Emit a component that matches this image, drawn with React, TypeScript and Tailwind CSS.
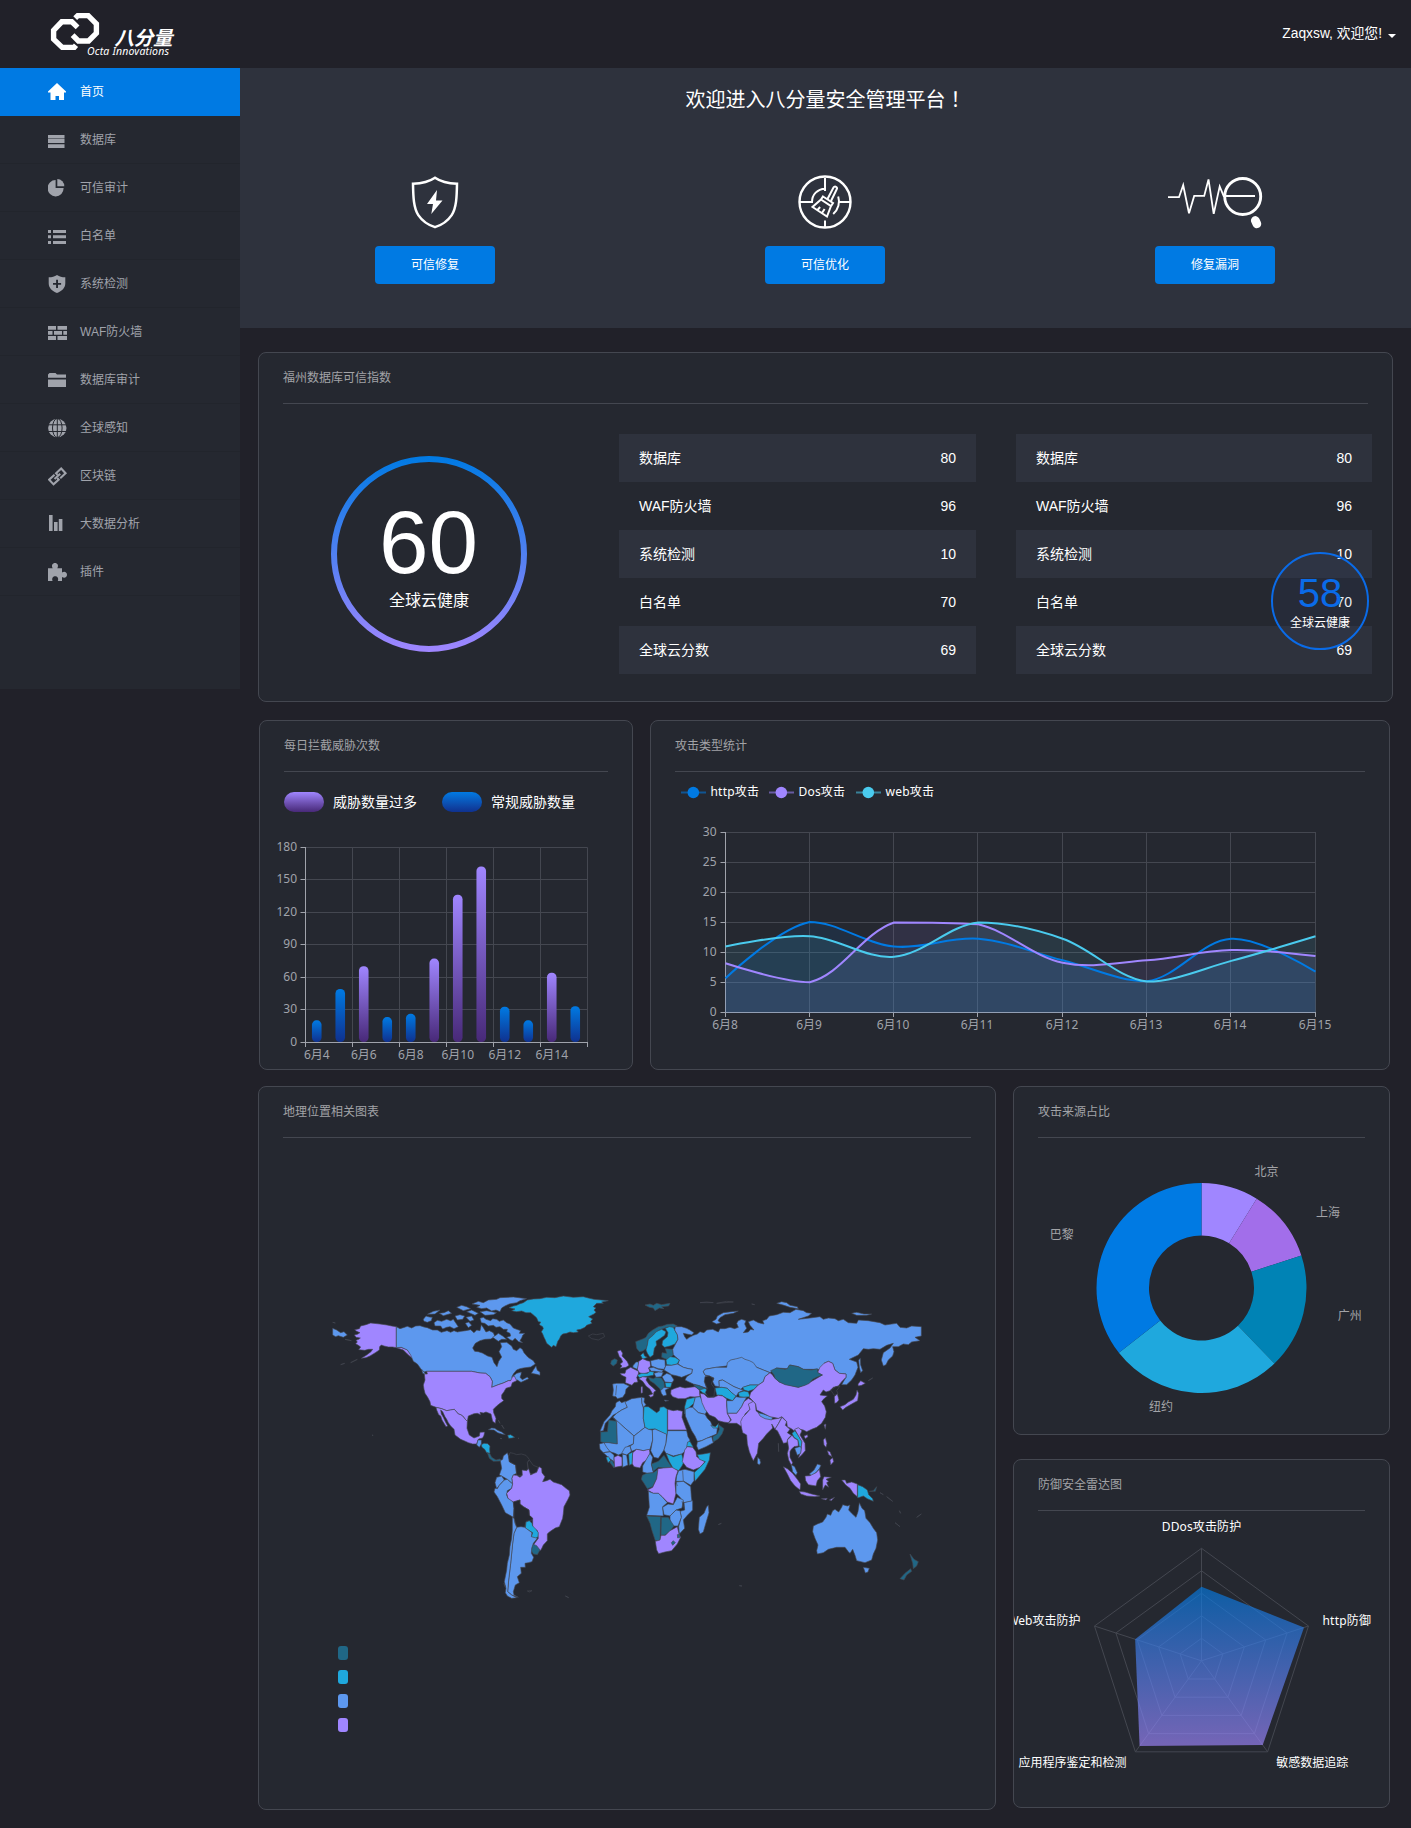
import React from 'react';

const SANS = "font-['Liberation_Sans','Noto_Sans_CJK_SC',sans-serif]";
const CHART = "font-['Noto_Sans','Noto_Sans_CJK_SC',sans-serif]";

/* ---------- Sidebar icons, 20x20 ---------- */
const icons: Record<string, React.ReactNode> = {
  home: <path d="M9 1 18 9.6v.9h-2V18h-5v-4H7.5v4h-5v-7.5H0v-.9Z" />,
  db: <path d="M0 5h16.5v3.6H0ZM0 9.1h16.5v4H0ZM0 14.3h16.5v3.6H0Z" />,
  pie: (
    <>
      <path d="M7.6 2v8h8a8 8.2 0 1 1-8-8Z" />
      <path d="M9.3 1.1a7 7 0 0 1 7 7.2h-7Z" />
    </>
  ),
  list: <path d="M0 4h3v3H0ZM5 4h13v3H5ZM0 9.2h3v3H0ZM5 9.2h13v3H5ZM0 15h3v3H0ZM5 15h13v3H5Z" />,
  shield: (
    <path
      fillRule="evenodd"
      d="M9 1c2.4 1.700 5 2.300 8.300 2.300v6c0 4.500-3.300 8-8.300 9.700C4 17.300.7 13.800.7 9.300v-6C4 3.300 6.600 2.700 9 1ZM8.100 5.800v3.100H5v1.900h3.100v3.100h1.900v-3.100h3.100V8.900H10V5.800Z"
    />
  ),
  wall: (
    <path d="M0 4h8v3.800H0ZM9.500 4H19v3.800H9.500ZM0 9h4.500v3.800H0ZM6 9h8v3.800H6ZM15.300 9H19v3.800h-3.700ZM0 14h8v4H0ZM9.500 14H19v4H9.500Z" />
  ),
  folder: <path d="M0 4.500 1.500 3h6L9 4.500h9v3.300H0ZM0 9.400h18V17H0Z" />,
  globe: (
    <>
      <circle cx="9.300" cy="10" r="9.200" />
      <g fill="none" stroke="#252830" strokeWidth="1">
        <path d="M0 6.800h19M0 13.500h19M9.300 0v20" />
        <ellipse cx="9.300" cy="10" rx="4.800" ry="9.500" />
      </g>
    </>
  ),
  link: (
    <g fill="none" stroke="currentColor" strokeWidth="2.100" transform="rotate(-43 9.300 10.500)">
      <path d="M8.500 7.300H1.200v6.400h7V11.600" />
      <path d="M10.300 13.700h7.300V7.300h-7V9.500" />
      <path d="M5.500 10.500h7.800" />
    </g>
  ),
  bars: <path d="M1 1h3.600v16H1ZM6 8h3.600v9H6ZM10.800 5h3.600v12h-3.600Z" />,
  puzzle: (
    <path d="M0 6.200h4.700C3 3.500 4.600 1 7 1s4 2.500 2.300 5.200H14v4.300c2.700-1.700 5 0 5 2.300s-2.300 4-5 2.300V19h-4.200c1.200-3-.6-4.700-2.600-4.700S3.400 16 4.600 19H0Z" />
  ),
};

const nav: [string, string][] = [
  ['home', '首页'],
  ['db', '数据库'],
  ['pie', '可信审计'],
  ['list', '白名单'],
  ['shield', '系统检测'],
  ['wall', 'WAF防火墙'],
  ['folder', '数据库审计'],
  ['globe', '全球感知'],
  ['link', '区块链'],
  ['bars', '大数据分析'],
  ['puzzle', '插件'],
];

function Logo() {
  return (
    <svg width="130" height="50" viewBox="48 9 130 50" className="ml-12" fill="none">
      <g stroke="#fff" strokeWidth="5.400">
        <path d="M76 45.200 74.200 47.400H62.200L53.600 39.200V30.300L61.800 21.800H71.800L77.600 27.400" />
        <path d="M75.200 18.200 77.800 15.600H88.200L96.400 23.800V33.200L88.600 41H78.400L72.600 35.200" />
      </g>
      <text
        x="0"
        y="0"
        transform="translate(114.500 45.200) skewX(-14)"
        fill="#fff"
        fontSize="19.500"
        fontWeight="700"
        textLength="58"
        className={SANS}
      >
        八分量
      </text>
      <text x="87" y="54.800" fill="#fff" fontSize="10.500" fontStyle="italic" textLength="82" className={CHART}>
        Octa Innovations
      </text>
    </svg>
  );
}

function RepairIcon() {
  return (
    <svg width="50" height="54" viewBox="410 175 50 54" fill="none">
      <path
        d="M435 177.800c-6 4.100-13.500 5.700-22 6 .2 13 .6 24.200 5.300 31.300 4.500 6.600 10 10 16.700 12 6.700-2 12.200-5.400 16.700-12 4.700-7.100 5.100-18.300 5.300-31.300-8.500-.3-16-1.900-22-6Z"
        stroke="#fff"
        strokeWidth="2.500"
      />
      <path d="m437 190-10 14h6l-1.700 10L442.500 200.500h-6.500Z" fill="#fff" />
    </svg>
  );
}

function CleanIcon() {
  return (
    <svg width="56" height="54" viewBox="797 175 56 54" fill="none" stroke="#fff">
      <circle cx="825" cy="202" r="25.500" strokeWidth="2.400" />
      <path d="M825 178v13M800 202h12c0-7.500 5.500-13 13-13.300M838.500 202H850M825 220.500V227" strokeWidth="2" />
      <path d="M838.200 196.500c2 6 .2 13-5 17.500" strokeWidth="2" />
      <path d="m827.500 199 6-11.500a1.800 1.800 0 0 1 3.200 1.800L831 201" strokeWidth="2" />
      <path d="m823 196.500 10 6.500-2 3-10-6.500ZM821 199.500 812.500 207l14.500 9.500 4-10.500M817.500 210l2.600-3M822 213l2.600-4" strokeWidth="2" />
    </svg>
  );
}

function LeakIcon() {
  return (
    <svg width="98" height="54" viewBox="1166 175 98 54" fill="none" stroke="#fff">
      <path d="M1168 197.200h11l4.200-12 5.800 28 5.200-17.300h10l4.300-16.500 5.200 34.500 6-27.500 4 9.600h31.300" strokeWidth="1.800" />
      <circle cx="1242.700" cy="196.500" r="18" strokeWidth="2.900" />
      <rect x="1251.600" y="216" width="8.800" height="12.400" rx="4.400" fill="#fff" stroke="none" transform="rotate(-24 1256 222)" />
    </svg>
  );
}

function Card({ title, className, children }: { title: string; className: string; children: React.ReactNode }) {
  return (
    <section className={`flex shrink-0 flex-col overflow-hidden rounded-lg border border-[#444750] bg-[#252830] ${className}`}>
      <h2 className="mx-6 flex h-[51px] shrink-0 items-center border-b border-[#444750] text-xs text-[#a2a3a7]">{title}</h2>
      {children}
    </section>
  );
}

const scores: [string, number][] = [
  ['数据库', 80],
  ['WAF防火墙', 96],
  ['系统检测', 10],
  ['白名单', 70],
  ['全球云分数', 69],
];

function ScoreList({ className }: { className: string }) {
  return (
    <ul className={`mt-[30px] ${className}`}>
      {scores.map(([name, value], i) => (
        <li key={name} className={`flex h-12 items-center justify-between px-5 text-sm text-white ${i % 2 === 0 ? 'bg-[#2e323d]' : ''}`}>
          <span>{name}</span>
          <span>{value}</span>
        </li>
      ))}
    </ul>
  );
}

/* ---------- Bar chart ---------- */
const bars = [20, 49, 70, 23, 26, 77, 136, 162, 32.500, 20, 64, 33];

function BarChart() {
  const x0 = 305;
  const y0 = 1042;
  return (
    <svg width="372" height="257" viewBox="260 812 372 257" className={`shrink-0 ${CHART}`} fontSize="12">
      <defs>
        <linearGradient id="barHigh" x1="0" y1="0" x2="0" y2="1">
          <stop offset="0" stopColor="#a086ff" />
          <stop offset="1" stopColor="#482978" />
        </linearGradient>
        <linearGradient id="barLow" x1="0" y1="0" x2="0" y2="1">
          <stop offset="0" stopColor="#007ae3" />
          <stop offset="1" stopColor="#0f318f" />
        </linearGradient>
      </defs>
      {[0, 30, 60, 90, 120, 150, 180].map((v) => {
        const y = Math.floor(y0 - (v * 195) / 180) + 0.500;
        return (
          <g key={v}>
            {v > 0 && <path d={`M305.500 ${y}H587.500`} stroke="#444750" />}
            <path d={`M300.500 ${y}h5`} stroke="#a0a3ab" />
            <text x="297" y={y + 3} textAnchor="end" fill="#a0a3ab">
              {v}
            </text>
          </g>
        );
      })}
      {[1, 2, 3, 4, 5, 6].map((i) => (
        <path key={i} d={`M${Math.floor(305 + i * 47) + 0.500} 847.500V1042`} stroke="#444750" />
      ))}
      {bars.map((v, i) => {
        const h = (v * 195) / 180;
        return (
          <rect
            key={i}
            x={x0 + 23.500 * (i + 0.500) - 4.800}
            y={y0 - h}
            width="9.600"
            height={h}
            rx="4.500"
            fill={v > 60 ? 'url(#barHigh)' : 'url(#barLow)'}
          />
        );
      })}
      <path d="M305.500 847V1042.500H588" stroke="#a0a3ab" fill="none" />
      {[0, 1, 2, 3, 4, 5, 6].map((i) => (
        <path key={i} d={`M${305.500 + i * 47} 1042v5`} stroke="#a0a3ab" />
      ))}
      {[4, 6, 8, 10, 12, 14].map((d, i) => (
        <text key={d} x={316.800 + i * 47} y="1058.500" textAnchor="middle" fill="#a0a3ab">{`6月${d}`}</text>
      ))}
    </svg>
  );
}

/* ---------- Smoothed line chart ---------- */
const series = [
  { name: 'http攻击', color: '#007ae3', data: [5.700, 15.100, 11, 12.300, 8.700, 5.200, 12.300, 6.800] },
  { name: 'Dos攻击', color: '#a086ff', data: [8.200, 5.050, 15, 14.700, 8.300, 8.700, 10.400, 9.400] },
  { name: 'web攻击', color: '#4acbee', data: [11, 12.700, 9.300, 15, 12.300, 5.150, 8.600, 12.700] },
];
const legendX = [681, 769, 856];
const SMOOTH = 0.350;

function smoothPath(data: number[]) {
  const pts = data.map((v, i) => [725.500 + i * 84.286, 1012.500 - v * 6]);
  const ys = pts.map((p) => p[1]);
  const lo = Math.min(...ys);
  const hi = Math.max(...ys);
  const clampY = (y: number) => Math.max(lo, Math.min(hi, y));
  let d = `M${pts[0][0]} ${pts[0][1]}`;
  let cp = pts[0];
  for (let i = 1; i < pts.length; i++) {
    const p = pts[i];
    const prev = pts[i - 1];
    const next = pts[i + 1] ?? p;
    const vx = next[0] - prev[0];
    const vy = next[1] - prev[1];
    const a = Math.hypot(p[0] - prev[0], p[1] - prev[1]);
    const b = Math.hypot(next[0] - p[0], next[1] - p[1]);
    const r = b / (a + b);
    const last = i === pts.length - 1;
    const c2 = last ? p : [p[0] - vx * SMOOTH * (1 - r), clampY(p[1] - vy * SMOOTH * (1 - r))];
    d += `C${cp[0]} ${cp[1]} ${c2[0]} ${c2[1]} ${p[0]} ${p[1]}`;
    cp = [p[0] + vx * SMOOTH * r, clampY(p[1] + vy * SMOOTH * r)];
  }
  return d;
}

function LineChart() {
  return (
    <svg width="738" height="297" viewBox="651 772 738 297" className={`shrink-0 ${CHART}`} fontSize="12">
      {series.map((s, i) => (
        <g key={s.name}>
          <path d={`M${legendX[i]} 792.500h25`} stroke={s.color} strokeWidth="2" opacity=".55" />
          <circle cx={legendX[i] + 12.300} cy="792.500" r="5.800" fill={s.color} />
          <text x={legendX[i] + 29.500} y="796" fill="#fff" textLength={[48.500, 46.500, 48.500][i]}>
            {s.name}
          </text>
        </g>
      ))}
      {[0, 5, 10, 15, 20, 25, 30].map((v) => (
        <g key={v}>
          <path d={`M725.500 ${1012.500 - v * 6}H1315.500`} stroke="#444750" />
          <path d={`M720.500 ${1012.500 - v * 6}h5`} stroke="#a0a3ab" />
          <text x="716.500" y={1015.500 - v * 6} textAnchor="end" fill="#a0a3ab">
            {v}
          </text>
        </g>
      ))}
      {[8, 9, 10, 11, 12, 13, 14, 15].map((d, i) => {
        const x = Math.floor(725 + i * 84.290) + 0.500;
        return (
          <g key={d}>
            <path d={`M${x} 832V1012`} stroke="#444750" />
            <path d={`M${x} 1012v5`} stroke="#a0a3ab" />
            <text x={x - 0.500} y="1028.500" textAnchor="middle" fill="#a0a3ab">{`6月${d}`}</text>
          </g>
        );
      })}
      <path d="M725.500 832V1012.500H1315.500" stroke="#a0a3ab" fill="none" />
      {series.map((s) => (
        <path key={s.name} d={`${smoothPath(s.data)}V1012.500H725.500Z`} fill={s.color} opacity=".1" />
      ))}
      {series.map((s) => (
        <path key={s.name} d={smoothPath(s.data)} fill="none" stroke={s.color} strokeWidth="2" />
      ))}
    </svg>
  );
}

/* ---------- World map ---------- */
const P = '#a086ff';
const B = '#5d98ee';
const C = '#1fa8dd';
const T = '#206786';
const D = '#252830';

const americas: [string, string][] = [
  [P, 'M229 140 215 138 201 135 180 132 152 129 138 134 122 138 118 146 104 149 110 154 120 158 112 163 103 165 108 172 121 174 116 178 108 181 112 186 107 191 115 196 122 201 116 209 134 211 146 208 158 208 153 215 140 225 124 235 138 233 150 228 166 218 178 210 179 200 184 195 192 198 205 201 218 201 229 203ZM229 203 243 202 262 209 270 220 282 232 280 238 262 222 250 210Z'],
  [B, 'M38 145 50 150 62 158 72 155 82 165 70 172 55 167 47 170 38 165Z'],
  [B, 'M229 140 240 146 250 143 262 139 275 144 287 138 300 137 312 141 322 143 338 150 352 150 364 157 381 152 392 157 402 152 412 156 423 154 437 152 452 149 462 158 470 150 480 152 484 134 492 146 498 156 508 152 520 158 525 170 512 177 495 178 480 182 466 190 458 204 464 214 475 215 487 219 503 228 516 232 522 248 531 260 536 244 545 231 537 215 545 200 541 188 560 187 575 198 580 208 590 212 600 203 607 208 612 218 624 232 640 242 646 252 632 261 610 264 600 266 590 270 580 282 575 292 590 280 604 276 603 284 600 292 607 299 622 291 626 296 603 307 592 300 576 302 565 302 550 309 535 314 515 322 517 304 510 290 497 280 480 279 455 274 320 274 312 276 305 270 292 252 280 244 272 225 262 210 244 202 229 203Z'],
  [B, 'M640 270 648 258 652 271 660 276 660 286 650 283 634 280ZM305 268 312 276 318 284 308 280Z'],
  [B, 'M342 128 352 121 365 124 380 118 392 122 400 118 408 130 415 140 402 146 390 140 380 142 368 147 362 138 345 138ZM310 118 318 108 328 111 337 112 334 122 322 127 312 124Z'],
  [B, 'M456 72 475 64 490 68 505 60 530 58 540 53 580 51 620 56 600 62 590 68 568 72 555 78 545 84 540 95 528 90 515 93 500 84 485 86 470 82 480 76Z'],
  [B, 'M480 95 500 92 530 98 520 104 495 106ZM410 82 425 76 440 80 452 86 430 92ZM322 103 340 94 360 90 345 102ZM358 100 372 98 385 92 395 100 370 107ZM405 108 420 104 434 108 428 118 412 120ZM438 112 455 108 462 120 450 124ZM440 95 455 90 475 100 465 106ZM436 130 446 126 455 136 445 143Z'],
  [B, 'M480 115 490 112 498 118 512 122 518 116 530 118 538 124 550 120 560 128 570 132 580 144 590 148 602 152 598 160 615 160 608 166 606 172 600 182 608 188 596 185 585 175 578 182 572 180 560 172 572 168 570 160 560 155 562 148 550 148 540 140 528 142 520 136 505 138 494 130 484 128ZM518 172 530 164 535 160 548 168 560 178 545 178 535 184Z'],
  [C, 'M567 83 580 78 590 76 598 72 610 68 622 60 640 57 660 56 680 52 705 53 730 48 760 52 790 50 805 54 822 58 865 62 845 66 850 70 830 70 820 80 828 84 822 90 828 97 822 102 806 110 818 117 812 124 816 130 800 136 795 142 782 148 770 150 775 156 760 158 750 156 740 160 728 162 722 168 718 178 714 182 708 200 700 196 695 202 680 190 676 180 672 172 668 162 664 155 670 146 668 140 658 134 662 126 655 125 650 114 644 108 632 98 618 98 605 93 590 95 575 92 585 87Z'],
  [P, 'M320 274H455L480 279 497 280 510 290 517 304 515 322 535 314 550 309 565 302 572 302 578 290 583 288 590 302 577 308 573 320 558 325 552 335 545 345 545 355 551 362 540 370 530 378 520 388 521 398 528 415 526 430 518 424 513 402 498 396 490 399 480 397 482 404 472 400 462 401 445 408 442 424 436 418 428 408 422 404 415 402 403 388 380 392 365 386 348 382 332 376 330 365 323 352 315 340 312 328 310 315 315 300 313 282 322 282Z'],
  [P, 'M348 382 365 386 380 392 403 388 415 402 422 404 428 408 436 418 442 424 441 445 448 465 462 474 478 468 480 457 494 456 492 466 488 474 476 477 474 480 470 492 458 492 445 488 432 482 422 478 405 465 402 448 392 438 385 428 380 418 375 410 368 395 362 390 364 402 370 412 376 425 383 438 378 440 366 420 362 408 356 404 350 390Z'],
  [B, 'M470 495 474 480 484 480 484 492 478 502Z'],
  [C, 'M484 494 492 490 503 491 510 498 509 508 510 520 500 518 494 508 486 502Z'],
  [T, 'M502 518 510 522 515 532 528 540 540 537 544 543 520 544 508 535Z'],
  [B, 'M505 449 515 444 524 445 533 451 545 456 556 464 545 462 533 458 522 450Z'],
  [C, 'M563 466 572 464 584 472 576 474 566 475Z'],
  [B, 'M541 542 548 538 550 528 562 518 566 530 568 545 580 552 587 555 588 568 590 580 580 585 576 595 578 612 562 598 545 588 538 585 545 565Z'],
  [D, 'M566 530 570 518 580 520 590 524 604 522 618 526 628 538 622 548 625 568 608 575 607 586 590 586 587 555 568 545Z'],
  [D, 'M622 548 628 540 640 556 655 562 650 577 640 582 630 582 625 568Z'],
  [B, 'M530 592 545 588 553 600 545 608 538 616 530 626 525 608Z'],
  [B, 'M525 625 532 626 538 616 553 600 562 598 578 612 575 625 562 632 560 645 564 655 575 658 580 668 582 685 580 712 570 706 556 698 545 675 532 650 522 636Z'],
  [P, 'M580 585 590 586 600 592 607 586 606 570 620 572 626 566 632 585 642 580 650 577 657 560 665 565 666 578 675 590 668 605 680 602 690 598 700 606 712 610 725 614 738 625 748 632 750 645 744 658 732 680 730 700 728 715 722 730 718 740 706 744 700 748 688 756 682 762 682 782 670 795 664 808 660 812 640 795 655 775 652 752 640 745 638 738 638 715 628 706 627 690 610 680 600 672 600 660 580 666 564 655 560 640 575 625 578 612 576 595Z'],
  [D, 'M580 666 600 660 600 672 610 680 627 690 628 706 638 715 634 722 618 724 614 742 590 742 582 715 582 685Z'],
  [C, 'M618 726 628 722 636 730 638 738 648 748 655 758 654 770 645 777 634 770 638 758 616 745Z'],
  [T, 'M638 792 650 797 660 810 652 824 640 822 634 812Z'],
  [B, 'M590 742 603 740 614 742 636 758 634 770 652 775 640 790 635 805 634 820 641 832 636 845 625 848 615 850 616 862 602 862 604 880 592 890 598 908 586 915 580 935 582 945 595 952 575 945 563 935 566 900 572 850 578 790 582 760Z'],
  [B, 'M577 712 582 715 585 730 590 742 582 760 578 790 572 850 566 900 563 935 575 945 590 953 575 955 562 948 556 938 558 925 553 905 560 870 562 850 568 825 570 800 575 775 577 750Z'],
  [D, 'M805 168 818 162 830 164 850 160 854 170 835 180 815 176ZM622 933 636 932 628 936ZM736 948 746 953ZM158 464 158 468ZM540 475 546 476ZM594 474 597 476ZM535 420 540 430ZM545 435 552 446ZM38 127 46 129ZM75 178 94 182ZM62 254 74 250ZM92 248 112 238ZM552 910 556 922Z'],
];

const oldWorld: [string, string][] = [
  [T, 'M165 75 180 72 190 76 200 70 215 74 240 70 236 78 215 80 222 86 208 84 195 92 190 84 178 82Z'],
  [T, 'M137 185 150 180 160 176 168 172 175 160 188 150 205 140 218 138 232 133 250 132 262 138 256 142 232 142 218 146 205 152 190 165 175 178 170 205 158 213 148 215 140 205Z'],
  [C, 'M175 178 182 172 190 165 198 156 205 152 215 148 228 155 224 166 210 176 198 184 200 195 193 205 190 225 180 232 172 220 168 210 172 195Z'],
  [C, 'M226 145 238 140 250 142 254 150 262 164 264 178 255 192 240 198 224 202 216 195 218 182 232 170 234 158Z'],
  [T, 'M226 206 248 208 250 224 242 234 235 240 215 232 216 218 230 220Z'],
  [C, 'M152 226 160 218 164 228 172 232 158 238Z'],
  [B, 'M256 140 275 140 290 145 300 150 312 158 305 165 290 162 280 160 284 170 290 178 298 172 310 166 322 162 330 155 342 158 350 150 368 148 385 156 390 146 405 146 420 142 434 146 445 142 440 130 445 122 455 118 468 122 464 132 470 145 460 158 475 156 482 148 492 150 480 136 475 125 490 120 505 128 522 132 518 122 530 118 538 108 560 104 580 97 600 98 618 88 640 92 650 98 665 100 655 108 625 118 660 114 690 110 700 118 715 114 735 116 745 122 760 118 775 128 800 130 805 120 835 122 870 128 885 135 920 130 930 142 950 144 965 138 994 140 994 168 975 172 990 182 965 186 955 194 940 192 925 200 908 200 912 215 908 228 895 240 888 254 880 258 874 240 880 218 900 204 910 190 890 196 870 208 850 206 835 208 820 206 805 225 778 238 800 246 804 262 795 285 785 300 770 314 755 314 760 305 768 292 768 282 748 280 735 270 728 250 715 244 702 250 700 270 680 268 640 268 625 260 600 255 592 266 560 264 540 278 520 270 500 262 480 248 455 235 440 238 420 242 410 258 378 262 345 268 340 275 345 285 355 292 345 300 345 310 350 325 330 318 310 312 295 305 285 300 290 290 305 280 307 268 295 266 280 262 264 252 268 240 258 232 250 224 248 208 255 195 264 178 262 164 254 150Z'],
  [B, 'M806 240 811 235 812 255 818 272 812 278 808 262ZM366 125 378 118 382 108 400 98 425 95 445 93 430 100 405 104 390 113 384 122 392 128 380 132ZM560 70 575 65 590 68 600 76 622 80 625 86 600 82 582 76ZM785 100 800 97 822 102 845 102 830 106 800 106Z'],
  [P, 'M82 214 92 210 98 220 96 228 104 236 112 245 117 256 108 262 90 265 96 258 90 252 98 246 94 236 88 230Z'],
  [T, 'M64 242 74 236 82 240 80 250 70 258 62 252Z'],
  [P, 'M90 280 105 280 108 270 122 262 130 266 146 274 145 285 140 292 144 306 132 308 126 316 106 308 108 292 95 286Z'],
  [B, 'M68 312 80 310 100 310 118 318 108 328 106 340 98 352 82 356 78 350 68 348 70 330Z'],
  [P, 'M145 245 158 236 172 242 180 244 182 258 176 264 180 276 160 282 148 278 142 268Z'],
  [B, 'M130 256 138 246 146 246 142 268 128 262Z'],
  [C, 'M142 285 155 280 172 280 180 274 192 276 190 286 172 289 160 291 148 293Z'],
  [P, 'M146 296 158 290 172 292 168 300 178 314 190 324 198 332 192 336 190 348 182 352 176 346 188 342 180 328 168 318 158 304ZM153 320 158 320 158 338 153 340Z'],
  [B, 'M182 242 205 237 225 240 226 260 222 268 205 266 184 258Z'],
  [B, 'M176 264 190 262 205 268 220 271 215 277 195 274 184 274Z'],
  [B, 'M192 280 205 276 220 277 214 290 198 292Z'],
  [C, 'M228 240 240 230 255 232 268 240 262 252 245 256 230 254Z'],
  [B, 'M222 270 228 256 245 256 262 252 280 262 295 266 307 268 305 280 290 286 275 292 262 288 245 284 232 276Z'],
  [B, 'M216 290 230 280 242 284 252 300 246 308 225 306Z'],
  [T, 'M175 292 190 296 198 292 214 294 222 306 224 320 214 334 208 325 192 310 180 302Z'],
  [C, 'M225 308 246 308 242 322 228 322Z'],
  [B, 'M212 332 222 322 238 324 226 330 230 345 220 348 214 340ZM222 360 236 362 226 364Z'],
  [P, 'M243 330 255 325 270 320 285 324 300 322 315 320 328 328 330 350 315 351 300 350 285 356 265 356 248 350 242 342Z'],
  [T, 'M310 314 325 316 345 325 338 332 325 328Z'],
  [C, 'M328 330 345 325 354 332 350 344 338 338Z'],
  [C, 'M290 358 316 352 312 370 298 382 292 400 284 402 284 380Z'],
  [B, 'M316 352 330 350 340 365 345 380 350 395 345 403 325 398 308 382Z'],
  [B, 'M286 388 300 382 308 382 325 398 345 403 352 415 362 425 368 440 382 444 380 462 350 475 335 482 322 484 315 468 305 452 296 432 286 408Z'],
  [B, 'M322 486 335 482 350 475 365 470 370 488 348 500 325 510 320 498Z'],
  [C, 'M362 436 376 440 386 430 384 444 370 444Z'],
  [T, 'M368 470 382 462 388 448 386 434 402 446 396 462 385 476 370 486Z'],
  [B, 'M340 275 345 268 378 262 410 262 412 248 422 240 440 236 455 232 465 238 478 242 490 248 500 262 520 270 540 278 525 290 520 305 505 315 480 315 460 322 452 328 432 320 410 308 398 300 387 302 388 320 375 318 368 305 372 294 358 288 345 285Z'],
  [B, 'M387 302 398 300 412 308 432 320 452 328 462 330 445 338 438 350 425 338 412 325 396 322 388 322Z'],
  [C, 'M375 324 396 322 412 325 425 338 438 348 428 362 410 355 395 346 380 345Z'],
  [C, 'M458 322 480 315 505 315 492 328 475 334 462 330Z'],
  [C, 'M445 338 462 333 475 336 480 350 462 352 448 350Z'],
  [P, 'M330 340 342 342 352 352 372 352 385 346 398 348 410 357 410 375 412 400 422 420 415 428 400 426 385 422 375 412 358 405 345 388 336 368Z'],
  [B, 'M410 362 428 362 438 350 450 352 470 352 462 365 455 380 440 400 412 400Z'],
  [P, 'M412 400 440 400 455 380 462 365 475 355 490 364 478 375 480 388 465 402 462 418 455 440 440 430 415 430 424 420Z'],
  [P, 'M452 425 458 412 468 402 480 388 475 372 490 364 497 372 498 392 510 402 530 414 548 418 565 415 576 410 566 430 555 448 545 432 548 444 530 462 520 475 506 490 502 520 490 542 484 530 478 515 472 492 470 465 458 458 455 445Z'],
  [B, 'M505 398 520 402 548 412 545 420 525 416 510 408Z'],
  [B, 'M503 532 509 538 512 548 508 555 502 550Z'],
  [P, 'M540 278 548 285 552 292 568 306 600 316 625 322 650 312 672 300 697 285 682 278 690 262 702 250 715 244 728 250 735 270 748 280 768 282 768 292 755 305 745 318 730 322 720 332 708 336 700 330 690 345 712 348 700 358 695 365 704 378 709 395 706 412 695 430 680 442 665 448 650 455 640 450 622 446 612 452 604 446 592 440 590 425 576 410 565 415 540 410 520 400 500 390 497 372 490 364 478 352 482 338 505 315 520 305 525 290Z'],
  [T, 'M542 272 560 264 585 268 592 266 598 255 625 260 640 268 665 270 682 266 684 278 697 285 680 292 668 298 658 310 645 316 625 322 605 318 585 314 568 306 555 295 552 285Z'],
  [D, 'M722 330 738 320 750 318 740 332 744 342 733 346Z'],
  [P, 'M733 350 742 342 747 360 740 368 734 370ZM750 380 765 374 775 366 790 358 798 345 801 330 806 340 803 362 792 368 785 372 768 382 758 390ZM804 312 812 302 826 310 815 316 805 318ZM702 434 708 432 706 448ZM642 468 652 464 654 470 646 476Z'],
  [P, 'M555 448 566 430 576 412 590 425 586 436 600 448 592 458 604 466 594 476 590 488 580 490 572 472 562 452Z'],
  [P, 'M592 480 606 466 614 475 624 480 625 498 612 500 604 508 600 515 600 532 608 548 604 556 596 540 592 520 596 505Z'],
  [C, 'M606 460 615 452 624 465 636 485 634 502 628 500 624 480 612 472Z'],
  [P, 'M614 448 625 443 636 452 630 465 645 490 646 512 635 525 625 534 632 515 636 485 624 465Z'],
  [B, 'M614 505 628 500 634 502 632 520 622 526Z'],
  [B, 'M604 554 614 560 622 578 618 586 608 575ZM658 582 672 570 682 552 693 556 688 566 678 578 665 587Z'],
  [P, 'M645 588 660 587 678 578 688 568 692 590 682 602 678 618 655 614 647 602ZM580 560 592 566 608 580 622 598 632 612 630 630 615 618 602 602 592 582ZM628 634 645 636 665 642 690 648 675 650 650 648 632 642ZM698 600 702 590 724 592 708 598 716 604 710 608 716 622 706 615 698 630ZM700 480 706 473 711 490 708 502 702 495ZM720 540 728 533 731 545 722 555ZM712 512 720 515 726 530 716 524ZM694 656 712 655 708 660ZM718 660 734 652 724 662Z'],
  [P, 'M755 600 766 600 770 610 785 606 802 612V650L790 640 780 625 768 616Z'],
  [C, 'M803 614 818 620 832 630 836 644 848 656 850 664 832 656 820 648 803 654Z'],
  [T, 'M838 634 850 632 860 620 856 634ZM870 638 880 644ZM890 650 908 664Z'],
  [B, 'M670 738 682 732 698 726 708 712 712 702 722 706 728 692 735 688 746 696 755 682 758 674 772 678 780 675 776 690 785 700 798 712 804 695 808 668 816 685 824 692 828 715 840 728 850 745 860 758 863 780 858 805 850 822 845 840 825 848 800 842 795 826 788 808 780 820 775 815 765 802 740 802 715 808 700 818 682 822 680 812 684 795 675 775 668 755Z'],
  [B, 'M820 862 838 865 834 876 826 879Z'],
  [T, 'M960 822 972 838 985 845 980 858 970 866 968 850ZM962 866 965 874 950 885 942 900 930 896 945 880Z'],
  [D, 'M915 728 930 740ZM980 712 994 702ZM928 692 932 700ZM448 917 456 918ZM385 734 394 730ZM734 240 734 240ZM565 490 566 515ZM835 302 848 294ZM330 68 350 66 370 68ZM380 70 410 64 430 66ZM485 72 494 74Z'],
  [B, 'M78 368 88 362 95 368 106 364 112 382 95 390 80 400 70 405 58 418 46 430 40 452 30 454 42 425 60 405 66 392 76 380Z'],
  [B, 'M105 366 125 356 155 352 156 370 160 382 160 415 165 442 132 468 100 440 68 412 80 400 95 390 112 382Z'],
  [B, 'M155 352 164 354 162 366 168 374 160 382 156 370Z'],
  [C, 'M162 380 175 380 186 388 200 398 208 392 210 382 222 380 232 388V465L195 447 175 448 165 442 160 415Z'],
  [P, 'M233 388 250 392 262 390 278 394 276 412 290 450H233Z'],
  [T, 'M56 420 80 424 82 492 55 488 42 488 32 485 32 456 52 455Z'],
  [B, 'M70 412 100 440 132 468 130 492 115 498 105 508 98 520 85 525 75 520 60 515 45 500 42 488 55 488 82 492 80 424Z'],
  [B, 'M132 468 165 442 175 448 187 450 188 480 180 508 160 512 140 508 125 514 120 498 130 492Z'],
  [B, 'M187 450 195 447 230 463 228 490 222 510 205 535 192 532 182 512 188 480Z'],
  [B, 'M233 452H290L294 470 300 480 292 500 284 515 275 522 250 528 228 520 222 510 228 490Z'],
  [C, 'M293 486 300 484 310 502 298 500 290 500ZM228 520 250 530 275 522 282 545 276 558 266 572 250 566 238 545Z'],
  [P, 'M284 510 292 500 308 502 318 515 320 530 345 545 330 562 310 570 290 562 277 545Z'],
  [C, 'M322 524 340 522 361 518 358 540 345 568 325 592 315 604 312 578 330 562 346 545 328 538Z'],
  [P, 'M128 518 140 508 160 512 178 508 180 520 170 540 158 548 150 564 132 560 126 550Z'],
  [B, 'M28 492 42 488 50 502 60 515 40 518 30 508ZM40 518 60 515 72 525 72 545 58 535Z'],
  [C, 'M48 532 56 530 62 542 54 548Z'],
  [T, 'M58 545 66 540 74 555 72 564Z'],
  [P, 'M72 532 84 526 96 532 96 558 74 562Z'],
  [B, 'M97 522 110 525 114 555 98 562ZM95 520 105 502 120 498 124 514 110 525Z'],
  [C, 'M116 522 128 516 126 552 118 556Z'],
  [B, 'M158 558 168 540 180 520 188 532 184 552 190 578 172 580 158 576Z'],
  [T, 'M184 552 205 544 222 526 232 542 246 562 220 564 205 562 190 574Z'],
  [T, 'M157 586 170 580 190 578 204 568 200 596 188 620 172 626 162 610 154 598Z'],
  [P, 'M204 566 220 564 246 562 264 572 258 590 255 610 258 640 250 672 232 666 216 650 205 640 190 640 172 630 188 622 200 596Z'],
  [B, 'M266 572 285 568 312 575 312 602 302 616 282 604 258 604 260 588Z'],
  [B, 'M258 606 280 604 302 620 304 650 306 664 282 668 270 652 258 640Z'],
  [B, 'M175 634 190 640 205 640 216 650 232 668 218 680 220 708 170 706 178 682Z'],
  [B, 'M218 682 234 672 250 674 262 652 280 660 276 684 258 690 240 708 222 704Z'],
  [B, 'M282 668 308 662 308 690 292 706 280 720 284 745 268 762 266 740 274 710 270 694 284 690Z'],
  [B, 'M240 708 258 690 270 692 274 712 264 738 250 738 240 726Z'],
  [T, 'M170 708 212 710 210 782 196 782 186 752 180 730Z'],
  [T, 'M214 712 235 712 252 738 238 756 224 766 213 766Z'],
  [P, 'M196 784 210 780 213 766 226 766 240 752 262 740 268 765 272 772 262 792 245 812 225 816 206 821 200 810Z'],
  [T, 'M244 788 250 782 256 788 248 796ZM262 764 268 762 270 772 263 774Z'],
  [B, 'M350 680 355 676 357 698 346 735 340 756 330 762 325 748 328 712 342 700Z'],
];

const legendColors = ['bg-[#206786]', 'bg-[#1fa8dd]', 'bg-[#5d98ee]', 'bg-[#a086ff]'];

function WorldMap() {
  return (
    <svg width="735" height="492" viewBox="259 1138 735 492" className="shrink-0" strokeLinejoin="round">
      <g transform="translate(320 1280) scale(.33333)" stroke="#444750" strokeWidth="1.900">
        {americas.map(([fill, d], i) => (
          <path key={i} d={d} fill={fill} />
        ))}
      </g>
      <g transform="translate(590 1280) scale(.33333)" stroke="#444750" strokeWidth="1.900">
        {oldWorld.map(([fill, d], i) => (
          <path key={i} d={d} fill={fill} />
        ))}
        <path d="M345 290 358 288 370 296 364 312 374 325 372 350 356 352 346 338 352 325 343 305Z" fill={D} />
        <path d="M80 316 77 346M278 572 280 604M276 664 284 690M258 604 262 618" fill="none" />
      </g>
    </svg>
  );
}

/* ---------- Donut ---------- */
const slices = [
  { a: 0, b: 31.700, color: '#a086ff', name: '北京', x: 1266.400, y: 1171.700 },
  { a: 31.700, b: 72, color: '#a26eea', name: '上海', x: 1328, y: 1212.700 },
  { a: 72, b: 136, color: '#0083b5', name: '广州', x: 1349.700, y: 1315.700 },
  { a: 136, b: 231.900, color: '#1fa8dd', name: '纽约', x: 1160.900, y: 1406.700 },
  { a: 231.900, b: 360, color: '#007ae3', name: '巴黎', x: 1061.700, y: 1234.700 },
];

function Donut() {
  const pt = (deg: number, r: number) => {
    const t = (deg * Math.PI) / 180;
    return `${1201.500 + r * Math.sin(t)} ${1288 - r * Math.cos(t)}`;
  };
  return (
    <svg width="375" height="296" viewBox="1014 1138 375 296" className={`shrink-0 ${CHART}`} fontSize="12">
      {slices.map((s) => (
        <g key={s.name}>
          <path
            d={`M${pt(s.a, 105)}A105 105 0 0 1 ${pt(s.b, 105)}L${pt(s.b, 52.500)}A52.500 52.500 0 0 0 ${pt(s.a, 52.500)}Z`}
            fill={s.color}
          />
          <text x={s.x} y={s.y + 4.500} textAnchor="middle" fill="#a2a3a7">
            {s.name}
          </text>
        </g>
      ))}
    </svg>
  );
}

/* ---------- Radar ---------- */
function Radar() {
  const poly = (rs: number[]) =>
    rs
      .map((r, i) => {
        const t = (i * 72 * Math.PI) / 180;
        return `${1201.500 + r * 112.500 * Math.sin(t)},${1660.800 - r * 112.500 * Math.cos(t)}`;
      })
      .join(' ');
  return (
    <svg width="375" height="296" viewBox="1014 1511 375 296" className={`shrink-0 ${CHART}`} fontSize="12">
      <defs>
        <linearGradient id="radarFill" x1="0" y1="0" x2="0" y2="1">
          <stop offset="0" stopColor="#007ae3" />
          <stop offset="1" stopColor="#a086ff" />
        </linearGradient>
      </defs>
      <g fill="none" stroke="#444750">
        {[0.200, 0.400, 0.600, 0.800, 1].map((k) => (
          <polygon key={k} points={poly([k, k, k, k, k])} />
        ))}
        {[0, 1, 2, 3, 4].map((i) => (
          <polyline key={i} points={`1201.500,1660.800 ${poly([1, 1, 1, 1, 1]).split(' ')[i]}`} />
        ))}
      </g>
      <polygon points={poly([0.659, 0.958, 0.926, 0.936, 0.620])} fill="url(#radarFill)" opacity=".65" />
      <g fill="#fff">
        <text x="1201.500" y="1531" textAnchor="middle" textLength="79.500">DDos攻击防护</text>
        <text x="1322.500" y="1625" textLength="48.500">http防御</text>
        <text x="1276.300" y="1767">敏感数据追踪</text>
        <text x="1126.500" y="1767" textAnchor="end">应用程序鉴定和检测</text>
        <text x="1080.500" y="1625" textAnchor="end">Web攻击防护</text>
      </g>
    </svg>
  );
}

const actions = [
  { icon: <RepairIcon />, label: '可信修复' },
  { icon: <CleanIcon />, label: '可信优化' },
  { icon: <LeakIcon />, label: '修复漏洞' },
];

export default function App() {
  return (
    <div className={`h-[1828px] w-[1411px] overflow-hidden bg-[#212129] text-white ${SANS}`}>
      <header className="flex h-[68px] items-center justify-between">
        <Logo />
        <div className="flex items-center gap-[6px] pt-px pr-[15px] text-[13.8px]">
          <span>Zaqxsw, 欢迎您!</span>
          <span className="mt-0.5 border-x-4 border-t-4 border-x-transparent border-t-white" />
        </div>
      </header>

      <div className="flex items-start">
        <aside className="h-[621px] w-60 shrink-0 bg-[#252830]">
          {nav.map(([icon, label], i) => (
            <a
              key={icon}
              className={`flex h-12 items-center pl-12 text-xs ${
                i === 0 ? 'bg-[#007ae3] text-white' : 'border-b border-[#22252c] text-[#a0a3ab]'
              }`}
            >
              <svg width="20" height="20" viewBox="0 0 20 20" fill="currentColor" className="mr-3 shrink-0">
                {icons[icon]}
              </svg>
              {label}
            </a>
          ))}
        </aside>

        <main className="flex w-[1171px] flex-col">
          <section className="h-[260px] bg-[#2e323d]">
            <h1 className="h-[47px] pt-[17px] text-center text-xl leading-[30px]">
              欢迎进入八分量安全管理平台
              <span lang="zh-TW" className="font-['Noto_Sans_CJK_TC',sans-serif] leading-none">！</span>
            </h1>
            <div className="mt-[60px] grid w-[1170px] grid-cols-3">
              {actions.map((a) => (
                <div key={a.label} className="flex flex-col items-center gap-[17px]">
                  {a.icon}
                  <button className="h-[38px] w-[120px] rounded bg-[#007ae3] text-xs">{a.label}</button>
                </div>
              ))}
            </div>
          </section>

          <Card title="福州数据库可信指数" className="relative mt-6 ml-[18px] h-[350px] w-[1135px]">
            <div className="flex">
              <div className="flex w-[339px] justify-center pt-[51px]">
                <svg width="198" height="198" viewBox="-99 -99 198 198">
                  <defs>
                    <linearGradient id="ring" gradientUnits="userSpaceOnUse" x1="0" y1="-98" x2="0" y2="98">
                      <stop offset="0" stopColor="#007ae3" />
                      <stop offset="1" stopColor="#a086ff" />
                    </linearGradient>
                  </defs>
                  <circle r="95" fill="none" stroke="url(#ring)" strokeWidth="6" />
                  <text x="-0.500" y="19" textAnchor="middle" fontSize="89" fill="#fff">60</text>
                  <text y="52" textAnchor="middle" fontSize="16" fill="#fff">全球云健康</text>
                </svg>
              </div>
              <ScoreList className="ml-[21px] w-[357px]" />
              <ScoreList className="ml-10 w-[356px]" />
            </div>
            <div className="absolute top-[199px] left-[1012px] flex size-[98px] flex-col items-center rounded-full border-2 border-[#0a6be8] bg-[#2e4a8a]/10">
              <span className="mt-[18px] text-[40px] leading-[42px] text-[#0a6be8]">58</span>
              <span className="mt-0.5 text-xs leading-[14px]">全球云健康</span>
            </div>
          </Card>

          <div className="mt-[18px] ml-[19px] flex gap-[17px]">
            <Card title="每日拦截威胁次数" className="h-[350px] w-[374px]">
              <div className="mt-5 ml-6 flex h-5 shrink-0 items-center text-sm">
                <i className="h-5 w-10 rounded-full bg-linear-to-b from-[#a086ff] to-[#482978]" />
                <span className="ml-[9px] w-[109px]">威胁数量过多</span>
                <i className="h-5 w-10 rounded-full bg-linear-to-b from-[#007ae3] to-[#0f318f]" />
                <span className="ml-[9px]">常规威胁数量</span>
              </div>
              <BarChart />
            </Card>
            <Card title="攻击类型统计" className="h-[350px] w-[740px]">
              <LineChart />
            </Card>
          </div>

          <div className="mt-4 ml-[18px] flex items-start gap-[17px]">
            <Card title="地理位置相关图表" className="h-[724px] w-[738px]">
              <WorldMap />
              <div className="mt-4 ml-[78.5px] flex flex-col gap-2.5">
                {legendColors.map((c) => (
                  <i key={c} className={`h-3.5 w-2.5 rounded-[3px] ${c}`} />
                ))}
              </div>
            </Card>
            <div className="flex flex-col gap-6">
              <Card title="攻击来源占比" className="h-[349px] w-[377px]">
                <Donut />
              </Card>
              <Card title="防御安全雷达图" className="h-[349px] w-[377px]">
                <Radar />
              </Card>
            </div>
          </div>
        </main>
      </div>
    </div>
  );
}
